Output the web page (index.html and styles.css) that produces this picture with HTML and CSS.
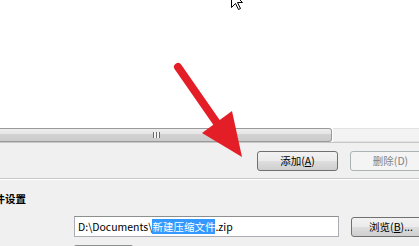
FILE: index.html
```html
<!DOCTYPE html>
<html>
<head>
<meta charset="utf-8">
<link rel="stylesheet" href="styles.css">
</head>
<body>
<div class="shot">
  <div class="list"></div>
  <div class="hscroll">
    <div class="thumb"><span class="grip"></span></div>
    <div class="track"></div>
  </div>
  <div class="panel">
    <div class="btnrow">
      <button class="btn">添加(<u>A</u>)</button>
      <button class="btn disabled">删除(D)</button>
    </div>
    <div class="sep"></div>
    <div class="group-title">文件设置</div>
    <div class="row">
      <div class="field">D:\Documents\<span class="sel">新建压缩文件</span>.zip</div>
      <button class="btn browse">浏览(<u>B</u>)...</button>
    </div>
    <div class="row row2">
      <div class="field small"></div>
    </div>
  </div>

  <svg class="arrow" width="419" height="246" viewBox="0 0 419 246">
    <line x1="178" y1="67" x2="219" y2="126" stroke="#e41e26" stroke-width="8" stroke-linecap="round"/>
    <polygon points="202,133 232,111 242,157" fill="#e41e26"/>
  </svg>
  <svg class="cursor" width="13" height="20" viewBox="0 0 13 20">
    <polygon points="0.5,0.5 0.5,16.5 4.5,12.5 7.5,18.5 9.5,17.5 6.5,11.5 11.5,11.5" fill="#fff" stroke="#000" stroke-width="1"/>
  </svg>
</div>
</body>
</html>
```
FILE: styles.css
```css
html, body {
  margin: 0;
  padding: 0;
  background: #f0f0f0;
}
.shot {
  position: relative;
  width: 419px;
  height: 246px;
  overflow: hidden;
  background: #f0f0f0;
  font-family: "Noto Sans CJK SC", sans-serif;
  font-size: 10.5px;
  color: #000;
}
.list {
  height: 128px;
  background: #fff;
}
.hscroll {
  display: flex;
  height: 14px;
  background: #fff;
  border-bottom: 1px solid #c8c8c8;
}
.thumb {
  width: 332px;
  box-sizing: border-box;
  border: 1px solid #9a9a9a;
  border-left: none;
  border-radius: 0 3px 3px 0;
  background: linear-gradient(#ededed 0%, #e6e6e6 40%, #d2d2d2 45%, #cbcbcb 100%);
  display: flex;
  align-items: center;
  justify-content: center;
  margin-right: 1px;
}
.grip {
  width: 7px;
  height: 6px;
  margin-left: -18px;
  background: repeating-linear-gradient(90deg, #6a6a6a 0 1px, #f4f4f4 1px 3px);
}
.track {
  flex: 1;
  background: #f3f3f3;
  border-top: 1px solid #e2e2e2;
  border-bottom: 1px solid #e2e2e2;
}
.panel {
  display: flex;
  flex-direction: column;
}
.btnrow {
  display: flex;
  gap: 12px;
  padding: 8px 0 0 257px;
}
.btn {
  flex: none;
  width: 81px;
  height: 20px;
  padding: 0;
  box-sizing: border-box;
  border: 1px solid #707070;
  border-radius: 3px;
  background: linear-gradient(#f2f2f2 0%, #ebebeb 48%, #dddddd 52%, #cfcfcf 100%);
  font-family: "Noto Sans CJK SC", sans-serif;
  font-size: 10.5px;
  line-height: 18px;
  color: #000;
}
.btn.disabled {
  border-color: #adb2b5;
  background: #f4f4f4;
  color: #838383;
}
.sep {
  margin-top: 7px;
  height: 1px;
  background: #c9c9c9;
  border-bottom: 1px solid #fff;
}
.group-title {
  margin: 11px 0 0 -16px;
  font-weight: bold;
  height: 15px;
  line-height: 15px;
}
.row {
  display: flex;
  align-items: center;
  gap: 12px;
  margin-top: 10px;
  padding-left: 74px;
}
.field {
  flex: none;
  width: 265px;
  height: 21px;
  box-sizing: border-box;
  border: 1px solid #abadb3;
  border-top-color: #8e8f8f;
  background: #fff;
  padding-left: 3px;
  line-height: 19px;
  white-space: nowrap;
}
.sel {
  background: #3399ff;
  color: #fff;
}
.browse {
  width: 80px;
  margin-top: 1px;
}
.row2 {
  margin-top: 8px;
}
.field.small {
  width: 59px;
  height: 21px;
  border-radius: 2px;
}
.arrow {
  position: absolute;
  left: 0;
  top: 0;
}
.cursor {
  position: absolute;
  left: 231px;
  top: -9px;
}
```
